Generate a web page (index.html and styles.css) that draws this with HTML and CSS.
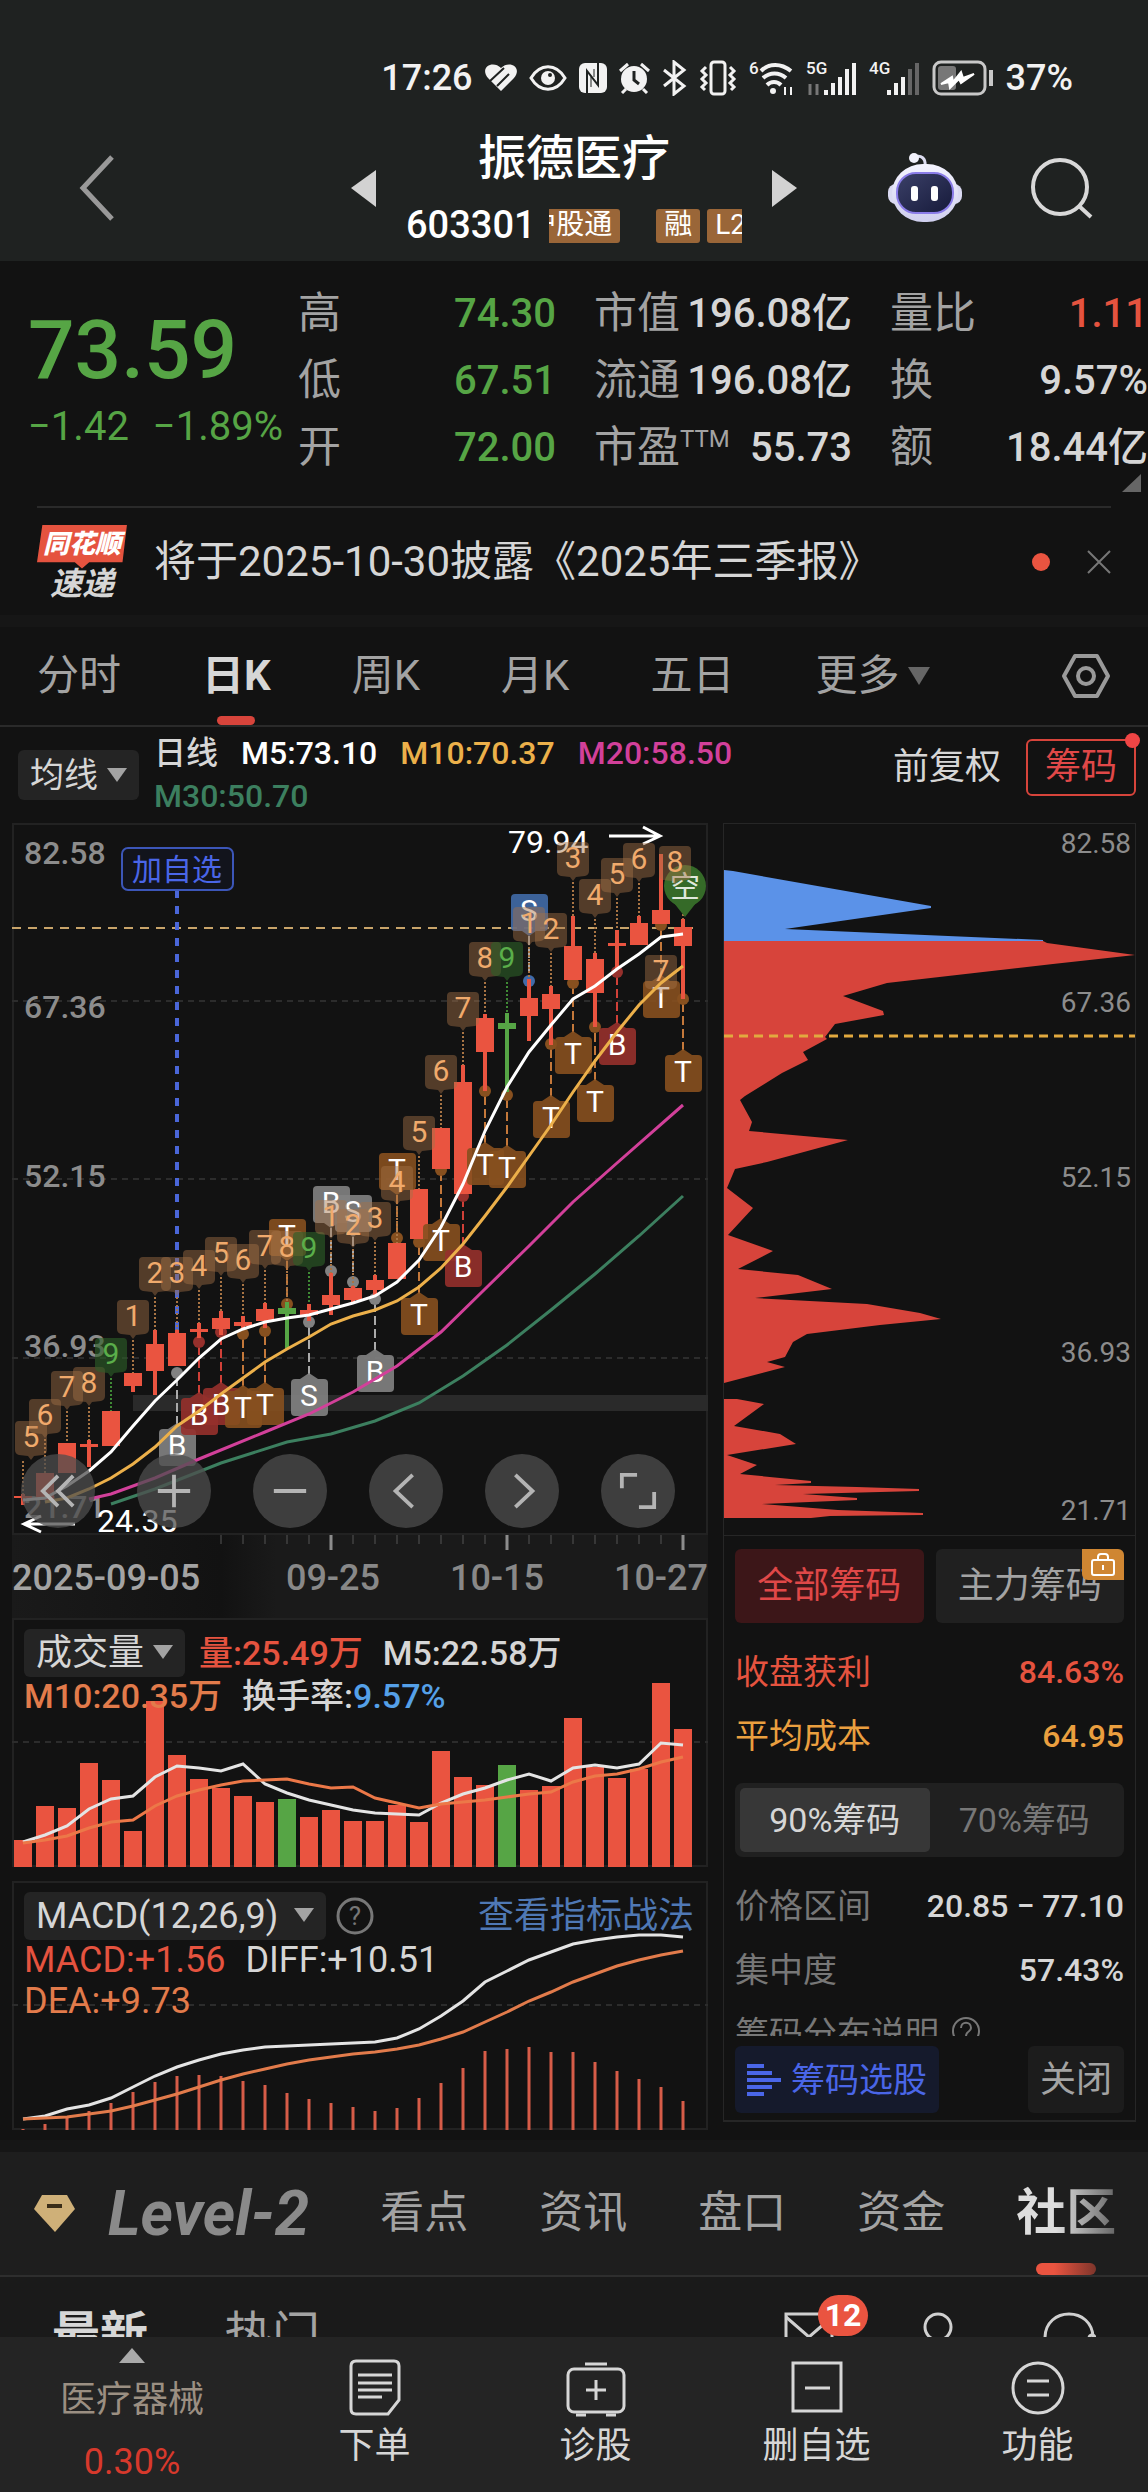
FILE: index.html
```html
<!DOCTYPE html>
<html lang="zh-CN">
<head>
    <meta charset="UTF-8">
    <meta name="viewport" content="width=device-width, initial-scale=1.0">
    <title>振德医疗 603301</title>
    <link rel="stylesheet" href="styles.css">
</head>
<body>
    <header class="top">
        <div class="status-bar">
            <span>17:26</span>
            <svg width="32" height="28" viewBox="0 0 32 28"><path d="M16 27 3 14C-6 3 8-4 16 4c8-8 22-1 13 10Z" fill="#f2f2f2"/><path d="M5 17 19 4M12 22 24 10" stroke="#1f2221" stroke-width="2"/></svg>
            <svg width="38" height="28" viewBox="0 0 38 28" fill="none" stroke="#f2f2f2" stroke-width="3"><path d="M2 14C11-1 27-1 36 14 27 29 11 29 2 14Z"/><circle cx="19" cy="14" r="7" fill="#f2f2f2" stroke="none"/><circle cx="21" cy="11" r="2" fill="#1f2221" stroke="none"/></svg>
            <svg width="28" height="30" viewBox="0 0 28 30"><rect width="28" height="30" rx="6" fill="#f2f2f2"/><path d="M8 30V8l11 14V0" fill="none" stroke="#1f2221" stroke-width="2"/><path d="M12 24V14M15 6v8" stroke="#1f2221" stroke-width="1"/></svg>
            <svg width="31" height="32" viewBox="0 0 31 32"><circle cx="15" cy="17" r="13" fill="#f2f2f2"/><path d="M1 9 9 2M30 9l-8-7M7 27l-4 4M24 27l4 4" stroke="#f2f2f2" stroke-width="3"/><path d="M15 9v9l5 4" fill="none" stroke="#1f2221" stroke-width="3"/></svg>
            <svg width="25" height="36" viewBox="0 0 25 36" fill="none" stroke="#f2f2f2" stroke-width="3"><path d="M2 10 22 26 12 34V2l10 8L2 26"/></svg>
            <svg width="38" height="36" viewBox="0 0 38 36" fill="none" stroke="#f2f2f2" stroke-width="3"><rect x="12" y="2" width="14" height="32" rx="3"/><path d="M7 7 3 11l4 4-4 4 4 4-4 4 3 3M31 7l4 4-4 4 4 4-4 4 4 4-3 3"/></svg>
            <svg width="45" height="36" viewBox="0 0 45 36" fill="none" stroke="#f2f2f2" stroke-width="4"><path d="M12 11C20 3 32 3 42 11M14 18c7-6 16-6 23 0M18 25c4-4 10-4 14 0"/><circle cx="24" cy="31" r="3" fill="#f2f2f2" stroke="none"/><path d="M36 27v8M42 27v8" stroke-width="2"/><text class="tiny" x="0" y="14">6</text></svg>
            <svg width="51" height="36" viewBox="0 0 51 36"><text class="tiny" x="0" y="14">5G</text><path d="M4 24v11M11 24v11" stroke="#777" stroke-width="3"/><path d="M20 30v5M27 23v12M34 17v18M41 9v26M48 3v32" stroke="#f2f2f2" stroke-width="4"/></svg>
            <svg width="51" height="36" viewBox="0 0 51 36"><text class="tiny" x="0" y="14">4G</text><path d="M20 30v5M27 23v12M34 17v18" stroke="#f2f2f2" stroke-width="4"/><path d="M41 9v26M48 3v32" stroke="#666" stroke-width="4"/></svg>
            <svg width="62" height="36" viewBox="0 0 62 36"><rect x="2" y="2" width="51" height="32" rx="7" fill="none" stroke="#c8c8c8" stroke-width="3"/><rect x="6" y="6" width="18" height="24" rx="3" fill="#777"/><path d="M9 24 20 17l1 5 8-10 2 6 11-4-13 9-2-4-9 9-1-6Z" fill="#fff" stroke="#fff" stroke-width="2"/><path d="M59 10v16" stroke="#c8c8c8" stroke-width="4"/></svg>
            <span>37%</span>
        </div>
        <div class="title-bar">
            <button class="icon-btn back"><svg width="36" height="66" viewBox="0 0 36 66"><path d="M33 2 4 33l29 31" fill="none" stroke="#999" stroke-width="5"/></svg></button>
            <div class="stock">
                <button class="icon-btn"><svg width="25" height="37" viewBox="0 0 25 37"><path d="M25 0v37L0 18Z" fill="#d2d2d2"/></svg></button>
                <div class="stock-name">
                    <h1>振德医疗</h1>
                    <div class="code-row">
                        <span class="code">603301</span>
                        <div class="tags">
                            <span class="tag tag-first">沪股通</span>
                            <span class="tag">融</span>
                            <span class="tag">L2</span>
                        </div>
                    </div>
                </div>
                <button class="icon-btn"><svg width="25" height="37" viewBox="0 0 25 37"><path d="M0 0v37l25-19Z" fill="#d2d2d2"/></svg></button>
            </div>
            <div class="title-tools">
                <button class="icon-btn">
                    <svg width="74" height="70" viewBox="0 0 74 70">
                        <defs>
                            <linearGradient id="shell" x1="0" y1="0" x2="0" y2="1"><stop offset="0" stop-color="#f4f4ff"/><stop offset="1" stop-color="#cfcfee"/></linearGradient>
                            <linearGradient id="visor" x1="0" y1="0" x2="1" y2="1"><stop offset="0" stop-color="#3b4068"/><stop offset="1" stop-color="#161a3a"/></linearGradient>
                        </defs>
                        <path d="M27 4c6-2 11 1 10 9" fill="none" stroke="#dcdcf0" stroke-width="3"/>
                        <circle cx="26" cy="5" r="5" fill="#f1f1fb"/>
                        <rect x="0" y="31" width="74" height="20" rx="8" fill="#dadaf2"/>
                        <rect x="4" y="11" width="66" height="58" rx="31" fill="url(#shell)"/>
                        <rect x="9" y="20" width="56" height="40" rx="19" fill="url(#visor)" stroke="#8a7ce8" stroke-width="2"/>
                        <rect x="23" y="33" width="7" height="15" rx="3" fill="#fff"/>
                        <rect x="43" y="33" width="7" height="15" rx="3" fill="#fff"/>
                    </svg>
                </button>
                <button class="icon-btn"><svg width="62" height="64" viewBox="0 0 62 64" fill="none" stroke="#d8d8d8" stroke-width="4"><circle cx="29" cy="31" r="27"/><path d="M48 50l12 11"/></svg></button>
            </div>
        </div>
    </header>

    <section class="quote">
        <div class="price">
            <strong>73.59</strong>
            <div class="change"><span>−1.42</span><span>−1.89%</span></div>
        </div>
        <dl class="green">
            <div><dt>高</dt><dd>74.30</dd></div>
            <div><dt>低</dt><dd>67.51</dd></div>
            <div><dt>开</dt><dd>72.00</dd></div>
        </dl>
        <dl>
            <div><dt>市值</dt><dd>196.08亿</dd></div>
            <div><dt>流通</dt><dd>196.08亿</dd></div>
            <div><dt>市盈<sup>TTM</sup></dt><dd>55.73</dd></div>
        </dl>
        <dl>
            <div><dt>量比</dt><dd class="red">1.11</dd></div>
            <div><dt>换</dt><dd>9.57%</dd></div>
            <div><dt>额</dt><dd>18.44亿</dd></div>
        </dl>
        <span class="corner"></span>
    </section>

    <section class="news">
        <div class="news-badge"><b>同花顺</b><i>速递</i></div>
        <a href="#">将于2025-10-30披露《2025年三季报》</a>
        <span class="dot"></span>
        <button class="icon-btn"><svg width="24" height="24" viewBox="0 0 24 24"><path d="M1 1l22 22M23 1 1 23" stroke="#777" stroke-width="2"/></svg></button>
    </section>

    <nav class="period-tabs">
        <a href="#">分时</a>
        <a href="#" class="active">日K</a>
        <a href="#">周K</a>
        <a href="#">月K</a>
        <a href="#">五日</a>
        <a href="#" class="more">更多<span class="caret"></span></a>
        <button class="icon-btn setting"><svg width="50" height="46" viewBox="0 0 50 46" fill="none" stroke="#999" stroke-width="4" stroke-linejoin="round"><path d="M14 3h22l11 20-11 20H14L3 23Z"/><circle cx="25" cy="23" r="8"/></svg></button>
    </nav>

    <section class="ma-bar">
        <button class="drop">均线<span class="caret"></span></button>
        <div class="ma-legend">
            <span>日线</span>
            <span class="white">M5:73.10</span>
            <span class="gold">M10:70.37</span>
            <span class="pink">M20:58.50</span>
            <span class="teal">M30:50.70</span>
        </div>
        <div class="ma-tools">
            <button class="plain">前复权</button>
            <button class="chip-btn">筹码</button>
        </div>
    </section>

    <main class="charts">
        <div class="left-col">
            <div class="panel k-panel">
                <svg id="kline" viewBox="0 0 696 712"></svg>
                <div class="k-buttons">
                    <button><svg viewBox="0 0 40 40"><path d="M20 4 4 20l16 16M36 4 20 20l16 16"/></svg></button>
                    <button><svg viewBox="0 0 40 40"><path d="M20 3v34M3 20h34"/></svg></button>
                    <button><svg viewBox="0 0 40 40"><path d="M3 20h34"/></svg></button>
                    <button><svg viewBox="0 0 40 40"><path d="M27 3 9 20l18 17"/></svg></button>
                    <button><svg viewBox="0 0 40 40"><path d="M13 3l18 17-18 17"/></svg></button>
                    <button><svg viewBox="0 0 40 40"><path d="M3 17V3h16M21 37h16V21"/></svg></button>
                </div>
            </div>
            <div class="axis">
                <svg id="ticks" viewBox="0 0 696 16"></svg>
                <div class="dates">
                    <span>2025-09-05</span>
                    <span>09-25</span>
                    <span>10-15</span>
                    <span>10-27</span>
                </div>
            </div>
            <div class="panel">
                <svg id="volume" viewBox="0 0 696 249"></svg>
                <div class="sub-legend">
                    <button class="drop">成交量<span class="caret"></span></button>
                    <span class="red">量:25.49万</span>
                    <span>M5:22.58万</span>
                    <span class="orange">M10:20.35万</span>
                    <span>换手率:<em>9.57%</em></span>
                </div>
            </div>
            <div class="panel macd">
                <svg id="macd" viewBox="0 0 696 249"></svg>
                <div class="sub-legend">
                    <div class="macd-head">
                        <button class="drop">MACD(12,26,9)<span class="caret"></span></button>
                        <svg width="38" height="38" viewBox="0 0 38 38"><circle cx="19" cy="19" r="17" fill="none" stroke="#777" stroke-width="3"/><text x="19" y="28" class="help">?</text></svg>
                        <a href="#">查看指标战法</a>
                    </div>
                    <div class="macd-values">
                        <span class="red">MACD:+1.56</span>
                        <span>DIFF:+10.51</span>
                        <span class="orange">DEA:+9.73</span>
                    </div>
                </div>
            </div>
        </div>

        <aside class="chips">
            <svg class="chip-chart" viewBox="0 0 413 712">
                <path fill="#5b92e8" d="M1 47 10 48 208 83v2L62 106 320 117v2H1Z"/>
                <path fill="#d7443b" d="M1 118H320L324 120 412 132 330 141 164 160 120 173 160 188 161 192 112 201 102 214 104 216 80 229 85 237 59 250 22 273 17 277 29 299 26 308 125 317 44 339 12 346 4 365 30 385 5 412 50 428 15 446 75 452 109 466 32 475 144 481 197 490 218 496 157 502 84 511 70 519 62 534 44 539 62 544 1 560Z"/>
                <path fill="#d7443b" d="M1 576H14L41 581 11 603 57 611 73 621 4 632 34 642 17 651 88 658V660L52 662 134 664 196 666V668L80 671 134 675V677L39 681 115 687 200 690V692L107 693 88 695H1Z"/>
                <path d="M1 213H412" stroke="#e2a93f" stroke-width="3" stroke-dasharray="9 6"/>
                <g class="chip-axis">
                    <text x="408" y="30">82.58</text>
                    <text x="408" y="189">67.36</text>
                    <text x="408" y="364">52.15</text>
                    <text x="408" y="539">36.93</text>
                    <text x="408" y="697">21.71</text>
                </g>
            </svg>
            <div class="chip-body">
                <div class="chip-tabs">
                    <button class="on">全部筹码</button>
                    <button>主力筹码
                        <span class="lock"><svg width="24" height="26" viewBox="0 0 24 26" fill="none" stroke="#fff" stroke-width="2"><rect x="1" y="8" width="22" height="15" rx="2"/><path d="M7 8V5q0-3 3-3h4q3 0 3 3v3M12 13v5"/></svg></span>
                    </button>
                </div>
                <div class="chip-row red"><span>收盘获利</span><b>84.63%</b></div>
                <div class="chip-row amber"><span>平均成本</span><b>64.95</b></div>
                <div class="segment">
                    <button class="on">90%筹码</button>
                    <button>70%筹码</button>
                </div>
                <div class="chip-row dim"><span>价格区间</span><b>20.85 − 77.10</b></div>
                <div class="chip-row dim"><span>集中度</span><b>57.43%</b></div>
                <div class="chip-note">筹码分布说明
                    <svg width="30" height="30" viewBox="0 0 30 30"><circle cx="15" cy="15" r="13" fill="none" stroke="#777" stroke-width="2"/><path d="M10 12c0-7 10-7 10 0 0 4-5 3-5 8" fill="none" stroke="#777" stroke-width="2"/></svg>
                </div>
                <div class="chip-foot">
                    <button class="pick"><svg width="34" height="34" viewBox="0 0 34 34" stroke="#4a66e8" stroke-width="4"><path d="M0 3h17M0 10h25M0 17h34M0 24h25M0 31h17"/></svg>筹码选股</button>
                    <button class="close">关闭</button>
                </div>
            </div>
        </aside>
    </main>

    <nav class="info-tabs">
        <svg width="41" height="37" viewBox="0 0 41 37"><path d="M8 0h25l8 14-20 23L0 14Z" fill="#cfb078"/><path d="M13 11h15" stroke="#3a2d18" stroke-width="4"/></svg>
        <a href="#" class="level">Level-2</a>
        <a href="#">看点</a>
        <a href="#">资讯</a>
        <a href="#">盘口</a>
        <a href="#">资金</a>
        <a href="#" class="active"><span>社区</span></a>
    </nav>

    <section class="feed">
        <a href="#" class="active">最新</a>
        <a href="#">热门</a>
        <div class="feed-tools">
            <button class="icon-btn mail"><svg width="50" height="40" viewBox="0 0 50 40" fill="none" stroke="#d0d0d0" stroke-width="3"><rect x="2" y="2" width="46" height="36"/><path d="M2 5l23 20L48 5"/></svg><span class="badge">12</span></button>
            <button class="icon-btn"><svg width="40" height="46" viewBox="0 0 40 46" fill="none" stroke="#d0d0d0" stroke-width="3"><circle cx="20" cy="15" r="13"/><path d="M2 46c0-24 36-24 36 0"/></svg></button>
            <button class="icon-btn"><svg width="54" height="46" viewBox="0 0 54 46" fill="none" stroke="#d0d0d0" stroke-width="3"><path d="M3 34V26C3-6 51-6 51 26V34"/><rect x="47" y="23" width="6" height="14" rx="3"/></svg></button>
        </div>
    </section>

    <footer class="bottom-nav">
        <a href="#" class="sector"><span class="up"></span><span>医疗器械</span><span class="red">0.30%</span></a>
        <a href="#"><svg width="60" height="60" viewBox="0 0 60 60"><path d="M11 3h38q5 0 5 5v34L43 56H11q-5 0-5-5V8q0-5 5-5Z"/><path d="M13 17h34M13 25h34M13 32h34M13 39h24"/></svg>下单</a>
        <a href="#"><svg width="60" height="60" viewBox="0 0 60 60"><rect x="2" y="11" width="56" height="43" rx="6"/><path d="M19 6h22M30 22v20M20 32h20M10 57h10M40 57h10"/></svg>诊股</a>
        <a href="#"><svg width="60" height="60" viewBox="0 0 60 60"><rect x="6" y="5" width="48" height="48"/><path d="M18 30h25"/></svg>删自选</a>
        <a href="#"><svg width="60" height="60" viewBox="0 0 60 60"><circle cx="30" cy="30" r="25"/><path d="M19 23h22M19 37h22"/></svg>功能</a>
    </footer>

    <script src="chart.js"></script>
</body>
</html>
```
FILE: styles.css
```css
* {
    box-sizing: border-box;
}
body {
    margin: 0;
    background-color: #121212;
    color: #d6d6d6;
    font-family: Roboto, "Noto Sans CJK SC", sans-serif;
    font-size: 36px;
}
h1, dl, dd {
    margin: 0;
}
a {
    color: inherit;
    text-decoration: none;
}
button {
    font-family: inherit;
    font-size: inherit;
    line-height: 44px;
    color: inherit;
    border: none;
    padding: 0;
    background: none;
    cursor: pointer;
}
svg {
    display: block;
    flex: none;
}
.red { color: #e5533f; }
.green { color: #56a545; }
.white { color: #fff; }
.gold { color: #ecb04a; }
.pink { color: #d2409a; }
.teal { color: #3c7f5f; }
.orange { color: #e27b4b; }

/* status bar and title */
.top {
    background-color: #1f2221;
}
.status-bar {
    display: flex;
    justify-content: flex-end;
    align-items: center;
    gap: 12px;
    padding: 54px 75px 0 0;
    line-height: 48px;
    font-weight: 500;
    color: #f2f2f2;
}
.tiny {
    font-size: 17px;
    font-weight: 500;
    fill: #f2f2f2;
    stroke: none;
}
.title-bar {
    display: grid;
    grid-template-columns: 1fr 446px 1fr;
    align-items: center;
    height: 159px;
    padding-top: 13px;
}
.back {
    justify-self: start;
    margin-left: 79px;
}
.stock {
    display: flex;
    justify-content: space-between;
    align-items: center;
}
.stock-name {
    width: 336px;
    padding-top: 8px;
    line-height: 67px;
    text-align: center;
    color: #fff;
}
.stock-name h1 {
    font-size: 48px;
    font-weight: 500;
}
.code-row {
    display: flex;
    align-items: center;
    justify-content: space-between;
}
.code {
    font-size: 38px;
    font-weight: 500;
}
.tags {
    display: flex;
    justify-content: flex-end;
    gap: 7px;
    width: 193px;
    overflow: hidden;
}
.tag {
    flex: none;
    height: 34px;
    padding: 0 8px;
    border-radius: 3px;
    background-color: #9a6638;
    font-size: 28px;
    line-height: 32px;
}
.tag-first {
    margin-right: 29px;
}
.tag:last-child {
    margin-right: -12px;
}
.title-tools {
    display: flex;
    align-items: center;
    gap: 69px;
    padding-left: 91px;
}

/* quote */
.quote {
    position: relative;
    display: flex;
    gap: 38px;
    padding: 19px 0 25px 28px;
    line-height: 67px;
}
.price {
    width: 270px;
    margin-right: -38px;
    padding-top: 25px;
    color: #56a545;
}
.price strong {
    display: block;
    font-size: 82px;
    font-weight: 500;
    line-height: 90px;
}
.change {
    display: flex;
    gap: 24px;
    margin-top: 8px;
    font-size: 40px;
    line-height: 48px;
}
.quote dl {
    flex: 1;
}
.quote dl div {
    display: flex;
    justify-content: space-between;
    height: 67px;
}
.quote dt {
    font-size: 43px;
    color: #a3a3a3;
    white-space: nowrap;
}
.quote sup {
    font-size: 24px;
    line-height: 0;
}
.quote dd {
    font-size: 40px;
    font-weight: 500;
    white-space: nowrap;
}
.corner {
    position: absolute;
    right: 7px;
    bottom: 14px;
    border-left: 19px solid transparent;
    border-bottom: 18px solid #666;
}

/* news */
.news {
    display: flex;
    align-items: center;
    height: 109px;
    margin: 0 37px;
    border-top: 2px solid #2a2a2a;
}
.news a {
    flex: 1;
    margin-left: 27px;
    font-size: 42px;
    line-height: 50px;
    white-space: nowrap;
}
.news-badge {
    width: 90px;
    text-align: center;
    font-weight: 700;
    font-style: italic;
}
.news-badge b {
    display: block;
    height: 44px;
    background-color: #e5533f;
    clip-path: polygon(6% 0, 100% 0, 95% 86%, 58% 86%, 50% 100%, 42% 86%, 0 86%);
    color: #fff;
    font-size: 26px;
    line-height: 38px;
}
.news-badge i {
    display: block;
    font-size: 32px;
    line-height: 30px;
}
.dot {
    width: 18px;
    height: 18px;
    margin-right: 37px;
    border-radius: 50%;
    background-color: #ea5440;
}

/* period tabs */
.period-tabs {
    display: flex;
    align-items: center;
    gap: 81px;
    height: 112px;
    padding: 0 37px;
    border-top: 12px solid #161616;
    border-bottom: 2px solid #2a2a2a;
    font-size: 42px;
    color: #a3a3a3;
}
.period-tabs a {
    position: relative;
    line-height: 98px;
    white-space: nowrap;
}
.period-tabs .active {
    color: #d6d6d6;
    font-weight: 700;
}
.period-tabs .active::after {
    content: "";
    position: absolute;
    left: 50%;
    bottom: 0;
    width: 38px;
    height: 9px;
    margin-left: -19px;
    border-radius: 5px;
    background-color: #d7443b;
}
.caret {
    display: inline-block;
    margin: 0 0 6px 9px;
    border: 10px solid transparent;
    border-top: 14px solid #a3a3a3;
    border-bottom: none;
    vertical-align: middle;
}
.more .caret {
    border-width: 18px 11px 0;
    border-top-color: #666;
}
.setting {
    margin-left: auto;
}

/* moving average bar */
.ma-bar {
    display: flex;
    align-items: center;
    height: 96px;
    padding: 0 12px 0 18px;
    font-size: 32px;
}
.drop {
    height: 50px;
    padding: 0 12px;
    border-radius: 6px;
    background-color: #242424;
    white-space: nowrap;
}
.ma-bar .drop {
    margin-right: 15px;
    font-size: 34px;
}
.ma-legend {
    flex: 1;
    display: flex;
    flex-wrap: wrap;
    column-gap: 23px;
    font-weight: 500;
    line-height: 43px;
}
.ma-tools {
    display: flex;
    align-items: center;
    gap: 25px;
    padding-bottom: 16px;
}
.ma-tools button {
    font-size: 36px;
}
.chip-btn {
    position: relative;
    height: 57px;
    padding: 0 17px;
    border: 2px solid #d7443b;
    border-radius: 6px;
    color: #e04848;
}
.chip-btn::after {
    content: "";
    position: absolute;
    top: -8px;
    right: -6px;
    width: 15px;
    height: 15px;
    border-radius: 50%;
    background-color: #f04545;
}

/* charts */
.charts {
    display: flex;
    gap: 15px;
    padding: 0 12px 10px;
}
.left-col {
    flex: 696;
    min-width: 0;
}
.panel {
    display: grid;
    box-shadow: inset 0 0 0 2px #222;
}
.panel > * {
    grid-area: 1 / 1;
    min-width: 0;
}
.panel > svg {
    width: 100%;
}
.k-buttons {
    align-self: end;
    display: flex;
    justify-content: space-between;
    padding: 0 33px 7px 9px;
}
.k-buttons button {
    display: grid;
    place-items: center;
    width: 74px;
    height: 74px;
    border-radius: 50%;
    background-color: rgba(78, 78, 78, 0.75);
}
.k-buttons svg {
    width: 38px;
    fill: none;
    stroke: #b4b4b4;
    stroke-width: 4;
}
.axis {
    height: 83px;
    background: linear-gradient(90deg, #1a1a1a, #121212 30%, #1a1a1a 38%);
}
.axis svg {
    width: 100%;
}
.dates {
    display: flex;
    justify-content: space-between;
    color: #888;
    font-weight: 500;
    line-height: 54px;
}
.dates span:first-child {
    width: 204px;
    color: #a3a3a3;
}
.sub-legend {
    display: flex;
    flex-wrap: wrap;
    align-content: flex-start;
    align-items: center;
    column-gap: 20px;
    padding: 11px 14px 0 12px;
    font-size: 34px;
    font-weight: 500;
    line-height: 39px;
}
.sub-legend .drop {
    height: 48px;
    font-size: 36px;
}
.sub-legend .drop + span {
    margin-left: -6px;
}
.sub-legend em {
    font-style: normal;
    color: #55a0e8;
}
.macd {
    margin-top: 14px;
}
.macd .sub-legend {
    font-size: 36px;
    font-weight: 400;
}
.macd-head {
    display: flex;
    align-items: center;
    gap: 10px;
    width: 100%;
}
.macd-head .caret {
    margin-left: 16px;
}
.macd-head a {
    margin-left: auto;
    color: #4f78b4;
}
.macd-values {
    display: flex;
    flex-wrap: wrap;
    column-gap: 20px;
    max-width: 75%;
    line-height: 41px;
}
.help {
    font-size: 26px;
    fill: #777;
    text-anchor: middle;
}
.grid-line {
    stroke: #2c2c2c;
    stroke-width: 2;
    stroke-dasharray: 6 5;
}
.line {
    fill: none;
    stroke-width: 3;
}
.k-axis {
    font-size: 32px;
    fill: #8c8c8c;
    font-weight: 500;
}
.k-mark {
    font-size: 32px;
    fill: #fff;
}
.sign {
    font-size: 30px;
    text-anchor: middle;
}

/* chip distribution */
.chips {
    flex: 413;
    min-width: 0;
    align-self: flex-start;
    border-bottom: 1px solid #262626;
    box-shadow: inset 0 0 0 1px #262626;
}
.chip-chart {
    width: 100%;
}
.chip-axis {
    font-size: 28px;
    fill: #8c8c8c;
    text-anchor: end;
}
.chip-body {
    padding: 13px 12px 8px;
    border-top: 1px solid #262626;
}
.chip-tabs {
    display: flex;
    gap: 12px;
    margin-bottom: 17px;
}
.chip-tabs button {
    position: relative;
    flex: 1;
    height: 74px;
    border-radius: 6px;
    background-color: #202020;
    color: #a3a3a3;
    white-space: nowrap;
}
.chip-tabs .on {
    background-color: #3c1618;
    color: #e04848;
}
.lock {
    position: absolute;
    top: 0;
    right: 0;
    display: grid;
    place-items: center;
    width: 42px;
    height: 31px;
    border-radius: 0 6px 0 6px;
    background-color: #cf8632;
}
.chip-row {
    display: flex;
    justify-content: space-between;
    font-size: 34px;
    line-height: 64px;
}
.chip-row b {
    font-size: 32px;
    font-weight: 500;
}
.amber {
    color: #ea9f3f;
}
.dim span {
    color: #777;
}
.segment {
    display: flex;
    margin: 15px 0 17px;
    padding: 5px;
    border-radius: 8px;
    background-color: #202020;
    font-size: 34px;
}
.segment button {
    flex: 1;
    height: 64px;
    border-radius: 5px;
    color: #777;
}
.segment .on {
    background-color: #373737;
    color: #d6d6d6;
}
.chip-note {
    display: flex;
    gap: 12px;
    height: 34px;
    padding-top: 14px;
    overflow: hidden;
    color: #777;
    font-size: 34px;
    line-height: 36px;
}
.chip-foot {
    display: flex;
    justify-content: space-between;
    margin-top: 10px;
}
.chip-foot button {
    display: flex;
    align-items: center;
    gap: 10px;
    height: 67px;
    padding: 0 12px;
    border-radius: 6px;
    background-color: #1c1c1c;
    color: #a3a3a3;
}
.chip-foot .pick {
    background-color: #151a2c;
    color: #4a66e8;
    font-size: 34px;
}

/* info tabs */
.info-tabs {
    display: flex;
    align-items: center;
    gap: 71px;
    height: 137px;
    padding-left: 34px;
    overflow: hidden;
    border-top: 12px solid #161616;
    border-bottom: 2px solid #2e2e2e;
    background-color: #1e1e1e;
    font-size: 44px;
    line-height: 123px;
    color: #a3a3a3;
    white-space: nowrap;
}
.info-tabs .level {
    margin-left: -38px;
    font-size: 62px;
    font-weight: 700;
    font-style: italic;
    color: #8a8a8a;
}
.info-tabs .active {
    position: relative;
    font-size: 50px;
    font-weight: 700;
}
.info-tabs .active span {
    background: linear-gradient(90deg, #ddd 40%, #666);
    -webkit-background-clip: text;
    background-clip: text;
    color: transparent;
}
.info-tabs .active::after {
    content: "";
    position: absolute;
    left: 20px;
    bottom: 0;
    width: 60px;
    height: 12px;
    border-radius: 6px;
    background: linear-gradient(90deg, #ea5440 30%, #7d352b);
}

/* community feed */
.feed {
    display: flex;
    gap: 76px;
    height: 60px;
    padding: 0 52px;
    overflow: hidden;
    background-color: #1a1a1a;
    font-size: 48px;
    line-height: 116px;
    color: #a3a3a3;
}
.feed .active {
    color: #d6d6d6;
    font-weight: 700;
}
.feed-tools {
    display: flex;
    align-items: flex-start;
    gap: 84px;
    margin-left: auto;
    padding-top: 35px;
}
.mail {
    position: relative;
}
.badge {
    position: absolute;
    top: -17px;
    left: 34px;
    width: 50px;
    height: 41px;
    border-radius: 21px;
    background-color: #ea5440;
    color: #fff;
    font-size: 32px;
    font-weight: 700;
    line-height: 40px;
}

/* bottom navigation */
.bottom-nav {
    display: grid;
    grid-template-columns: 23% repeat(4, 1fr);
    height: 156px;
    background-color: #242424;
}
.bottom-nav a {
    display: flex;
    flex-direction: column;
    align-items: center;
    padding-top: 21px;
    line-height: 56px;
}
.bottom-nav svg {
    fill: none;
    stroke: #d6d6d6;
    stroke-width: 3;
}
.bottom-nav .sector {
    padding-top: 11px;
    line-height: 62px;
    color: #9b8f82;
}
.sector .red {
    color: #d7392c;
}
.up {
    border: 13px solid transparent;
    border-top: none;
    border-bottom: 15px solid #aaa;
    margin-bottom: 6px;
}
```
FILE: chart.js
```js
var NS = "http://www.w3.org/2000/svg";
var RED = "#ea5440";
var GREEN = "#56a545";

function add(parent, tag, attrs, text) {
    var el = document.createElementNS(NS, tag);
    for (var key in attrs) {
        el.setAttribute(key, attrs[key]);
    }
    if (text) {
        el.textContent = text;
    }
    parent.appendChild(el);
    return el;
}

// centre of the i-th day
function dayX(i) {
    return 11 + 22 * i;
}

function gridLine(svg, y) {
    add(svg, "path", { "class": "grid-line", d: "M0 " + y + "H696" });
}

// values: one y per day, or [day, y] pairs
function drawLine(svg, values, color) {
    var points = values.map(function (v, i) {
        return v.length ? dayX(v[0]) + "," + v[1] : dayX(i) + "," + v;
    });
    add(svg, "polyline", { "class": "line", points: points.join(" "), stroke: color });
}

// high, body top, body bottom, low
var candles = [
    [671, 673, 675, 682], [650, 650, 677, 677], [620, 620, 650, 650], [617, 621, 624, 644],
    [588, 588, 623, 623], [550, 550, 563, 569], [507, 521, 548, 572], [507, 510, 543, 543],
    [500, 506, 509, 515], [488, 495, 506, 512], [493, 499, 503, 507], [480, 486, 498, 505],
    [479, 485, 491, 526], [481, 487, 492, 498], [450, 472, 482, 492], [463, 465, 477, 480],
    [452, 457, 467, 472], [420, 420, 456, 456], [366, 366, 416, 416], [305, 305, 346, 346],
    [242, 259, 371, 371], [191, 195, 229, 268], [190, 200, 206, 269], [156, 175, 193, 218],
    [163, 171, 186, 222], [93, 123, 157, 157], [130, 136, 170, 204], [107, 120, 123, 146],
    [93, 100, 122, 122], [31, 87, 101, 101], [96, 104, 123, 176]
];
var greenDays = [12, 22];

// day, count, top of the tag
var counts = [
    [0, 5, 598], [1, 6, 576], [2, 7, 548], [3, 8, 544], [4, 9, 515], [5, 1, 477], [6, 2, 434],
    [7, 3, 434], [8, 4, 427], [9, 5, 414], [10, 6, 421], [11, 7, 407], [12, 8, 408], [13, 9, 409],
    [14, 1, 377], [15, 2, 386], [16, 3, 379], [17, 4, 343], [18, 5, 293], [19, 6, 232],
    [20, 7, 169], [21, 8, 119], [22, 9, 119], [23, 1, 84], [24, 2, 90], [25, 3, 19], [26, 4, 56],
    [27, 5, 35], [28, 6, 20], [29, 7, 132], [30, 8, 23]
];

// day, letter, top of the tag, y of the dot, fill
var T = "#87501f", B = "#96302c", G = "#828282", S = "#416ba8";
var signs = [
    [7, "B", 606, 550, G], [8, "B", 575, 519, B], [9, "B", 565, 509, B], [10, "T", 568, 511, T],
    [11, "T", 565, 508, T], [13, "S", 556, 499, G], [16, "B", 532, 476, G], [18, "T", 475, 419, T],
    [19, "T", 401, 347, T], [20, "B", 427, 373, B], [21, "T", 325, 268, T], [22, "T", 328, 272, T],
    [24, "T", 278, 221, T], [25, "T", 214, 160, T], [26, "T", 262, 204, T], [27, "B", 205, 149, B],
    [29, "T", 158, 102, T], [30, "T", 232, 176, T], [12, "T", 396, 481, T], [14, "B", 363, 448, G],
    [15, "S", 372, 459, G], [17, "T", 330, 415, T], [23, "S", 71, 158, S]
];

function drawKline() {
    var svg = document.getElementById("kline");
    add(svg, "rect", { x: 121, y: 572, width: 575, height: 16, fill: "#2a2a2a" });
    [178, 356, 535].forEach(function (y) { gridLine(svg, y); });
    add(svg, "path", { d: "M0 105H688", stroke: "#c8a46a", "stroke-width": 2, "stroke-dasharray": "9 7" });

    [["82.58", 41], ["67.36", 195], ["52.15", 364], ["36.93", 534], ["21.71", 695]].forEach(function (a) {
        add(svg, "text", { "class": "k-axis", x: 12, y: a[1] }, a[0]);
    });

    // day the stock was added to the watch list
    add(svg, "path", { d: "M165 67V510", stroke: "#4a66d8", "stroke-width": 4, "stroke-dasharray": "8 8" });
    add(svg, "rect", { x: 110, y: 25, width: 111, height: 42, rx: 6, fill: "#12141c", stroke: "#3c56b8", "stroke-width": 2 });
    add(svg, "text", { x: 165, y: 57, "font-size": 30, fill: "#4a66e8", "text-anchor": "middle" }, "加自选");

    signs.forEach(function (s) {
        var x = dayX(s[0]);
        var end = s[3] > s[2] ? s[2] + 42 : s[2] - 4;
        add(svg, "path", { d: "M" + x + " " + end + "V" + s[3], stroke: s[4] === T ? "#c4783a" : s[4] === B ? "#d04038" : "#aaa", "stroke-width": 2, "stroke-dasharray": "9 4" });
        add(svg, "circle", { cx: x, cy: s[3], r: 6, fill: s[4] });
    });
    counts.forEach(function (c) {
        if (c[0] !== 29) {
            add(svg, "path", { d: "M" + dayX(c[0]) + " " + (c[2] + 40) + "V" + candles[c[0]][0], stroke: c[1] === 9 ? "#3f8a35" : "#a87444", "stroke-width": 2, "stroke-dasharray": "2 2" });
        }
    });

    candles.forEach(function (c, i) {
        var color = greenDays.indexOf(i) >= 0 ? GREEN : RED;
        add(svg, "path", { d: "M" + dayX(i) + " " + c[0] + "V" + c[3], stroke: color, "stroke-width": 4 });
        add(svg, "rect", { x: dayX(i) - 9, y: c[1], width: 18, height: c[2] - c[1], fill: color });
    });

    signs.forEach(function (s) {
        var x = dayX(s[0]), y = s[2];
        var tip = s[3] > y ? "M" + (x - 7) + " " + (y + 37) + "h14l-7 5z" : "M" + (x - 9) + " " + y + "h18l-9-6z";
        var g = add(svg, "g", { opacity: 0.9 });
        add(g, "rect", { x: x - 18, y: y, width: 37, height: 37, rx: 4, fill: s[4] });
        add(g, "path", { d: tip, fill: s[4] });
    });
    signs.forEach(function (s) {
        add(svg, "text", { "class": "sign", x: dayX(s[0]), y: s[2] + 27, fill: "#fff" }, s[1]);
    });

    // 空 marker of the last day
    add(svg, "circle", { cx: 673, cy: 63, r: 21, fill: "#356a28" });
    add(svg, "path", { d: "M662 80h22l-11 14z", fill: "#356a28" });
    add(svg, "text", { x: 673, y: 74, "font-size": 30, fill: "#dfe8dc", "text-anchor": "middle" }, "空");

    add(svg, "text", { "class": "k-mark", x: 496, y: 30 }, "79.94");
    add(svg, "path", { d: "M597 13H647M631 4l17 9-17 8", fill: "none", stroke: "#fff", "stroke-width": 3 });

    counts.forEach(function (c) {
        var x = c[0] === 0 ? 19 : c[0] === 30 ? 663 : dayX(c[0]);
        var y = c[2];
        var nine = c[1] === 9;
        add(svg, "path", {
            d: "M" + (x - 12) + " " + y + "h24q4 0 4 4v25q0 4-4 5l-9 1-3 4-3-4-9-1q-4-1-4-5v-25q0-4 4-4z",
            fill: nine ? "rgb(45,95,40)" : "rgb(165,112,72)", "fill-opacity": nine ? 0.62 : 0.45
        });
        add(svg, "text", { "class": "sign", x: x, y: y + 26, fill: nine ? "#5aae4a" : "#f0aa6c" }, c[1]);
    });

    drawLine(svg, [[4, 681], [6, 666], [9, 640], [12, 619], [14, 611], [16, 598], [18, 580], [20, 553], [22, 522], [24, 487], [26, 451], [28, 413], [30, 373]], "#3c7f5f");
    drawLine(svg, [[3, 676], [4, 671], [6, 655], [8, 636], [11, 609], [13, 591], [15, 569], [17, 543], [19, 509], [21, 466], [23, 423], [25, 379], [27, 340], [30, 282]], "#d2409a");
    drawLine(svg, [[1, 679], [2, 675], [3, 666], [4, 655], [5, 641], [6, 624], [7, 603], [8, 588], [9, 571], [10, 555], [11, 539], [12, 526], [13, 514], [14, 501], [15, 493], [16, 487], [17, 478], [18, 464], [19, 445], [20, 421], [21, 393], [22, 364], [23, 333], [24, 302], [25, 269], [26, 238], [27, 209], [28, 182], [29, 160], [30, 143]], "#ecb04a");
    drawLine(svg, [677, 675, 663, 648, 629, 603, 578, 557, 535, 516, 506, 499, 495, 492, 486, 480, 473, 459, 437, 404, 361, 308, 264, 229, 202, 176, 163, 146, 131, 114, 111], "#fff");

    add(svg, "path", { d: "M63 701H12M29 693l-17 8 17 8", fill: "none", stroke: "#fff", "stroke-width": 3 });
    add(svg, "text", { "class": "k-mark", x: 85, y: 709 }, "24.35");
}

function drawTicks() {
    var svg = document.getElementById("ticks");
    for (var i = 9; i < 31; i++) {
        var big = i % 8 === 6;
        add(svg, "path", { d: "M" + dayX(i) + " 0V" + (big ? 15 : 9), stroke: big ? "#8c8c8c" : "#555", "stroke-width": big ? 3 : 1 });
    }
}

function drawVolume() {
    var svg = document.getElementById("volume");
    var tops = [222, 188, 190, 145, 162, 213, 83, 137, 161, 170, 178, 184, 181, 199, 192, 203, 203, 187, 204, 133, 159, 167, 147, 172, 168, 100, 149, 160, 151, 65, 111];
    gridLine(svg, 124);
    tops.forEach(function (y, i) {
        add(svg, "rect", { x: dayX(i) - 9, y: y, width: 18, height: 249 - y, fill: greenDays.indexOf(i) >= 0 ? GREEN : RED });
    });
    drawLine(svg, [224, 217, 208, 191, 181, 178, 159, 148, 150, 153, 146, 166, 175, 182, 187, 192, 195, 196, 197, 185, 176, 170, 162, 156, 163, 150, 147, 150, 146, 125, 127], "#e4e4e4");
    drawLine(svg, [225, 222, 218, 210, 204, 202, 188, 178, 172, 167, 163, 162, 161, 166, 170, 169, 180, 185, 190, 186, 184, 182, 179, 176, 174, 164, 158, 156, 151, 144, 139], "#ec7848");
}

function drawMacd() {
    var svg = document.getElementById("macd");
    var tops = [248, 243, 237, 230, 222, 211, 201, 195, 194, 195, 200, 204, 212, 218, 222, 226, 230, 227, 217, 202, 187, 170, 168, 166, 171, 171, 181, 190, 198, 206, 220];
    gridLine(svg, 124);
    tops.forEach(function (y, i) {
        add(svg, "path", { d: "M" + dayX(i) + " 249V" + y, stroke: "#d65c48", "stroke-width": 3 });
    });
    drawLine(svg, [238, 235, 228, 224, 217, 206, 195, 186, 179, 173, 169, 166, 165, 164, 163, 162, 161, 157, 148, 135, 120, 101, 90, 79, 71, 63, 59, 56, 54, 54, 56], "#e4e4e4");
    drawLine(svg, [238, 237, 236, 233, 230, 225, 219, 213, 206, 199, 193, 188, 183, 179, 176, 173, 171, 168, 164, 158, 151, 141, 131, 120, 111, 101, 93, 85, 79, 74, 70], "#e27b4b");
}

drawKline();
drawTicks();
drawVolume();
drawMacd();
```
